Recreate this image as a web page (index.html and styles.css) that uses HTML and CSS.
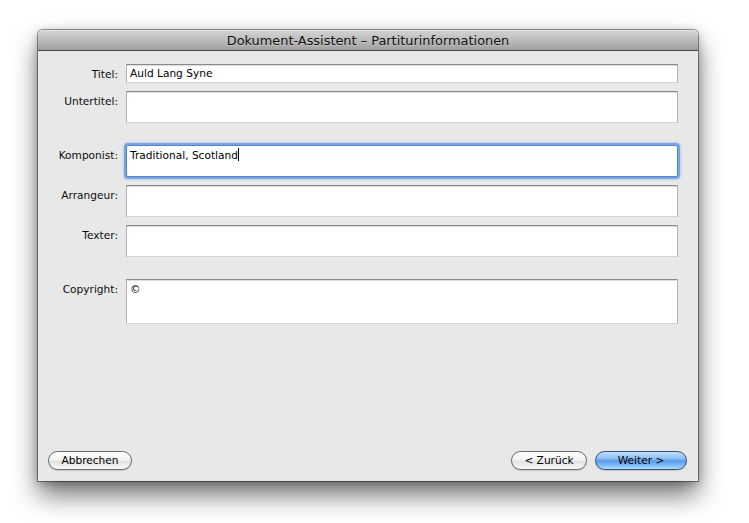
FILE: index.html
```html
<!DOCTYPE html>
<html lang="de">
<head>
<meta charset="utf-8">
<title>Dokument-Assistent – Partiturinformationen</title>
<link rel="stylesheet" href="styles.css">
</head>
<body>
<div class="window">
  <div class="titlebar">Dokument-Assistent – Partiturinformationen</div>
  <div class="content">
    <div class="form">
      <label class="label">Titel:</label>
      <div class="field single">Auld Lang Syne</div>

      <label class="label">Untertitel:</label>
      <div class="field multi"></div>

      <label class="label gap">Komponist:</label>
      <div class="field multi focused gap">Traditional, Scotland<span class="caret"></span></div>

      <label class="label">Arrangeur:</label>
      <div class="field multi"></div>

      <label class="label">Texter:</label>
      <div class="field multi"></div>

      <label class="label gap">Copyright:</label>
      <div class="field tall gap">©</div>
    </div>
    <div class="footer">
      <button class="btn btn-cancel">Abbrechen</button>
      <div class="nav">
        <button class="btn btn-back">&lt; Zurück</button>
        <button class="btn btn-default">Weiter &gt;</button>
      </div>
    </div>
  </div>
</div>
</body>
</html>
```

FILE: styles.css
```css
html, body {
  margin: 0;
  padding: 0;
  background: #ffffff;
}

body {
  width: 749px;
  height: 523px;
  overflow: hidden;
  font-family: "DejaVu Sans", "Liberation Sans", sans-serif;
  font-size: 10.6px;
  color: #000;
}

.window {
  margin: 30px 0 0 38px;
  width: 660px;
  height: 451px;
  box-sizing: border-box;
  display: flex;
  flex-direction: column;
  border-radius: 5px 5px 0 0;
  box-shadow: 0 14px 26px rgba(0, 0, 0, 0.55), 0 2px 10px rgba(0, 0, 0, 0.25), 0 0 0 1px rgba(0, 0, 0, 0.4);
  background: #e8e8e8;
}

.titlebar {
  height: 20px;
  line-height: 21px;
  text-align: center;
  font-size: 12.9px;
  color: #111;
  background: linear-gradient(to bottom, #d4d4d4 0%, #bcbcbc 50%, #a0a0a0 100%);
  border-bottom: 1px solid #4a4a4a;
  border-radius: 5px 5px 0 0;
  box-shadow: inset 0 1px 0 #e6e6e6;
  text-shadow: 0 1px 0 rgba(255, 255, 255, 0.3);
}

.content {
  flex: 1;
  display: flex;
  flex-direction: column;
  justify-content: space-between;
  background: #e8e8e8;
}

.form {
  display: grid;
  grid-template-columns: 80px 552px;
  column-gap: 8px;
  row-gap: 8px;
  align-items: start;
  padding-top: 13px;
}

.label {
  text-align: right;
  padding-top: 3px;
  line-height: 14px;
  color: #0d0d0d;
}

.gap {
  margin-top: 14px;
}

.field {
  box-sizing: border-box;
  background: #fff;
  border: 1px solid;
  border-color: #8a8a8a #b0b0b0 #d2d2d2 #b0b0b0;
  box-shadow: inset 0 1px 0 #dcdcdc;
  padding: 2px 3px;
  line-height: 14px;
  color: #000;
}

.single { height: 19px; padding-top: 1px; }
.multi { height: 32px; }
.tall { height: 45px; }

.focused {
  border: 1px solid #4f86d3;
  border-radius: 2px;
  box-shadow: 0 0 0 2px rgba(110, 156, 222, 0.85), 0 0 2px 3px rgba(140, 180, 235, 0.45);
}

.caret {
  display: inline-block;
  width: 1px;
  height: 13px;
  background: #000;
  vertical-align: -2px;
}

.footer {
  display: flex;
  justify-content: space-between;
  align-items: center;
  padding: 0 11px 11px 10px;
}

.nav {
  display: flex;
  gap: 8px;
}

.btn {
  font-family: "DejaVu Sans", "Liberation Sans", sans-serif;
  font-size: 10.6px;
  height: 19px;
  padding: 0;
  line-height: 17px;
  border-radius: 10px;
  border: 1px solid #6a6a6a;
  color: #000;
  background: linear-gradient(to bottom, #ffffff 0%, #f4f4f4 45%, #e2e2e2 55%, #f8f8f8 100%);
  box-shadow: 0 1px 1px rgba(0, 0, 0, 0.15);
}

.btn-cancel { width: 84px; }
.btn-back { width: 76px; }

.btn-default {
  width: 92px;
  border-color: #2c4f90;
  background: linear-gradient(to bottom, #c4def9 0%, #8bbdf2 40%, #5a9beb 52%, #78b6f5 75%, #aedbff 100%);
}
```
